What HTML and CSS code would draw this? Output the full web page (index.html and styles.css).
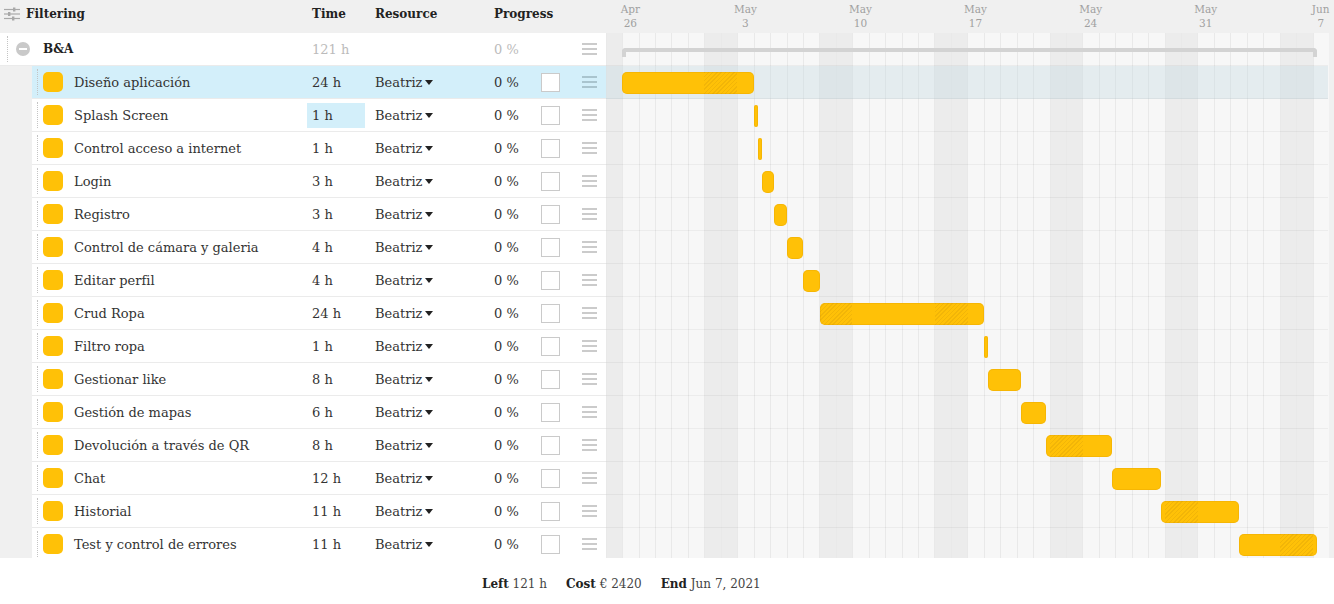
FILE: index.html
```html
<!DOCTYPE html>
<html lang="es">
<head>
<meta charset="utf-8">
<title>Gantt</title>
<link rel="stylesheet" href="styles.css">
</head>
<body>
<div class="main">
  <div class="left">
    <div class="lhead">
      <div class="hcell first">
        <svg class="sliders" width="16" height="14" viewBox="0 0 16 14"><g stroke="#a8a8a8" stroke-width="1.2" fill="none"><line x1="0" y1="2.5" x2="16" y2="2.5"/><line x1="0" y1="7" x2="16" y2="7"/><line x1="0" y1="11.5" x2="16" y2="11.5"/></g><g fill="#a8a8a8"><rect x="9" y="0.5" width="2.4" height="4"/><rect x="4" y="5" width="2.4" height="4"/><rect x="8" y="9.5" width="2.4" height="4"/></g></svg>
        <span>Filtering</span>
      </div>
      <div class="hcell time">Time</div>
      <div class="hcell">Resource</div>
      <div class="hcell">Progress</div>
      <div></div>
      <div></div>
    </div>

    <div class="row parent">
      <div class="tree"><i class="dots"></i><i class="minus"></i><b class="pname">B&amp;A</b></div>
      <div class="time muted">121 h</div>
      <div></div>
      <div class="muted">0 %</div>
      <div></div>
      <div><i class="menu"></i></div>
    </div>

    <div class="row task sel">
      <div class="tree"><i class="dots"></i><i class="sq"></i><span>Diseño aplicación</span></div>
      <div class="time">24 h</div>
      <div class="res">Beatriz<i class="caret"></i></div>
      <div>0 %</div>
      <div><i class="chk"></i></div>
      <div><i class="menu"></i></div>
    </div>
    <div class="row task">
      <div class="tree"><i class="dots"></i><i class="sq"></i><span>Splash Screen</span></div>
      <div class="time"><span class="editing">1 h</span></div>
      <div class="res">Beatriz<i class="caret"></i></div>
      <div>0 %</div>
      <div><i class="chk"></i></div>
      <div><i class="menu"></i></div>
    </div>
    <div class="row task">
      <div class="tree"><i class="dots"></i><i class="sq"></i><span>Control acceso a internet</span></div>
      <div class="time">1 h</div>
      <div class="res">Beatriz<i class="caret"></i></div>
      <div>0 %</div>
      <div><i class="chk"></i></div>
      <div><i class="menu"></i></div>
    </div>
    <div class="row task">
      <div class="tree"><i class="dots"></i><i class="sq"></i><span>Login</span></div>
      <div class="time">3 h</div>
      <div class="res">Beatriz<i class="caret"></i></div>
      <div>0 %</div>
      <div><i class="chk"></i></div>
      <div><i class="menu"></i></div>
    </div>
    <div class="row task">
      <div class="tree"><i class="dots"></i><i class="sq"></i><span>Registro</span></div>
      <div class="time">3 h</div>
      <div class="res">Beatriz<i class="caret"></i></div>
      <div>0 %</div>
      <div><i class="chk"></i></div>
      <div><i class="menu"></i></div>
    </div>
    <div class="row task">
      <div class="tree"><i class="dots"></i><i class="sq"></i><span>Control de cámara y galeria</span></div>
      <div class="time">4 h</div>
      <div class="res">Beatriz<i class="caret"></i></div>
      <div>0 %</div>
      <div><i class="chk"></i></div>
      <div><i class="menu"></i></div>
    </div>
    <div class="row task">
      <div class="tree"><i class="dots"></i><i class="sq"></i><span>Editar perfil</span></div>
      <div class="time">4 h</div>
      <div class="res">Beatriz<i class="caret"></i></div>
      <div>0 %</div>
      <div><i class="chk"></i></div>
      <div><i class="menu"></i></div>
    </div>
    <div class="row task">
      <div class="tree"><i class="dots"></i><i class="sq"></i><span>Crud Ropa</span></div>
      <div class="time">24 h</div>
      <div class="res">Beatriz<i class="caret"></i></div>
      <div>0 %</div>
      <div><i class="chk"></i></div>
      <div><i class="menu"></i></div>
    </div>
    <div class="row task">
      <div class="tree"><i class="dots"></i><i class="sq"></i><span>Filtro ropa</span></div>
      <div class="time">1 h</div>
      <div class="res">Beatriz<i class="caret"></i></div>
      <div>0 %</div>
      <div><i class="chk"></i></div>
      <div><i class="menu"></i></div>
    </div>
    <div class="row task">
      <div class="tree"><i class="dots"></i><i class="sq"></i><span>Gestionar like</span></div>
      <div class="time">8 h</div>
      <div class="res">Beatriz<i class="caret"></i></div>
      <div>0 %</div>
      <div><i class="chk"></i></div>
      <div><i class="menu"></i></div>
    </div>
    <div class="row task">
      <div class="tree"><i class="dots"></i><i class="sq"></i><span>Gestión de mapas</span></div>
      <div class="time">6 h</div>
      <div class="res">Beatriz<i class="caret"></i></div>
      <div>0 %</div>
      <div><i class="chk"></i></div>
      <div><i class="menu"></i></div>
    </div>
    <div class="row task">
      <div class="tree"><i class="dots"></i><i class="sq"></i><span>Devolución a través de QR</span></div>
      <div class="time">8 h</div>
      <div class="res">Beatriz<i class="caret"></i></div>
      <div>0 %</div>
      <div><i class="chk"></i></div>
      <div><i class="menu"></i></div>
    </div>
    <div class="row task">
      <div class="tree"><i class="dots"></i><i class="sq"></i><span>Chat</span></div>
      <div class="time">12 h</div>
      <div class="res">Beatriz<i class="caret"></i></div>
      <div>0 %</div>
      <div><i class="chk"></i></div>
      <div><i class="menu"></i></div>
    </div>
    <div class="row task">
      <div class="tree"><i class="dots"></i><i class="sq"></i><span>Historial</span></div>
      <div class="time">11 h</div>
      <div class="res">Beatriz<i class="caret"></i></div>
      <div>0 %</div>
      <div><i class="chk"></i></div>
      <div><i class="menu"></i></div>
    </div>
    <div class="row task">
      <div class="tree"><i class="dots"></i><i class="sq"></i><span>Test y control de errores</span></div>
      <div class="time">11 h</div>
      <div class="res">Beatriz<i class="caret"></i></div>
      <div>0 %</div>
      <div><i class="chk"></i></div>
      <div><i class="menu"></i></div>
    </div>
  </div>

  <div class="chart">
    <div class="chead">
      <div class="hc"></div>
      <div class="hc"><span>Apr</span><span>26</span></div>
      <div class="hc"></div><div class="hc"></div><div class="hc"></div><div class="hc"></div><div class="hc"></div><div class="hc"></div>
      <div class="hc"><span>May</span><span>3</span></div>
      <div class="hc"></div><div class="hc"></div><div class="hc"></div><div class="hc"></div><div class="hc"></div><div class="hc"></div>
      <div class="hc"><span>May</span><span>10</span></div>
      <div class="hc"></div><div class="hc"></div><div class="hc"></div><div class="hc"></div><div class="hc"></div><div class="hc"></div>
      <div class="hc"><span>May</span><span>17</span></div>
      <div class="hc"></div><div class="hc"></div><div class="hc"></div><div class="hc"></div><div class="hc"></div><div class="hc"></div>
      <div class="hc"><span>May</span><span>24</span></div>
      <div class="hc"></div><div class="hc"></div><div class="hc"></div><div class="hc"></div><div class="hc"></div><div class="hc"></div>
      <div class="hc"><span>May</span><span>31</span></div>
      <div class="hc"></div><div class="hc"></div><div class="hc"></div><div class="hc"></div><div class="hc"></div><div class="hc"></div>
      <div class="hc"><span>Jun</span><span>7</span></div>
    </div>
    <div class="cbody">
      <div class="cols">
        <i class="col we"></i>
        <i class="col"></i><i class="col"></i><i class="col"></i><i class="col"></i><i class="col"></i><i class="col we"></i><i class="col we"></i>
        <i class="col"></i><i class="col"></i><i class="col"></i><i class="col"></i><i class="col"></i><i class="col we"></i><i class="col we"></i>
        <i class="col"></i><i class="col"></i><i class="col"></i><i class="col"></i><i class="col"></i><i class="col we"></i><i class="col we"></i>
        <i class="col"></i><i class="col"></i><i class="col"></i><i class="col"></i><i class="col"></i><i class="col we"></i><i class="col we"></i>
        <i class="col"></i><i class="col"></i><i class="col"></i><i class="col"></i><i class="col"></i><i class="col we"></i><i class="col we"></i>
        <i class="col"></i><i class="col"></i><i class="col"></i><i class="col"></i><i class="col"></i><i class="col we"></i><i class="col we"></i>
        <i class="col"></i>
      </div>
      <div class="crow"><div class="summary" style="left:16.45px;width:695px"></div></div>
      <div class="crow sel"><div class="bar" style="left:16.45px;width:131.6px"><i class="hatch" style="left:82.25px;width:32.9px"></i></div></div>
      <div class="crow"><div class="bar thin" style="left:148.05px;width:4.11px"></div></div>
      <div class="crow"><div class="bar thin" style="left:152.16px;width:4.11px"></div></div>
      <div class="crow"><div class="bar" style="left:156.28px;width:12.34px"></div></div>
      <div class="crow"><div class="bar" style="left:168.61px;width:12.34px"></div></div>
      <div class="crow"><div class="bar" style="left:180.95px;width:16.45px"></div></div>
      <div class="crow"><div class="bar" style="left:197.4px;width:16.45px"></div></div>
      <div class="crow"><div class="bar" style="left:213.85px;width:164.5px"><i class="hatch" style="left:0;width:32.9px"></i><i class="hatch" style="left:115.15px;width:32.9px"></i></div></div>
      <div class="crow"><div class="bar thin" style="left:378.35px;width:4.11px"></div></div>
      <div class="crow"><div class="bar" style="left:382.46px;width:32.9px"></div></div>
      <div class="crow"><div class="bar" style="left:415.36px;width:24.68px"></div></div>
      <div class="crow"><div class="bar" style="left:440.04px;width:65.8px"><i class="hatch" style="left:4.11px;width:32.9px"></i></div></div>
      <div class="crow"><div class="bar" style="left:505.84px;width:49.35px"></div></div>
      <div class="crow"><div class="bar" style="left:555.19px;width:78.14px"><i class="hatch" style="left:4.11px;width:32.9px"></i></div></div>
      <div class="crow"><div class="bar" style="left:633.33px;width:78.13px"><i class="hatch" style="left:41.12px;width:32.9px"></i></div></div>
    </div>
  </div>
</div>
<div class="footer">
  <span><b>Left</b> 121 h</span>
  <span><b>Cost</b> € 2420</span>
  <span><b>End</b> Jun 7, 2021</span>
</div>
</body>
</html>
```
FILE: styles.css
```css
* { box-sizing: border-box; }
html, body { margin: 0; overflow: hidden; }
body {
  width: 1334px;
  height: 604px;
  background: #fff;
  font-family: "DejaVu Serif", "Liberation Serif", serif;
  font-size: 13px;
  color: #333;
}
i { display: block; font-style: normal; }

.main {
  display: flex;
  height: 558px;
  overflow: hidden;
  background: #f0f0f0;
}

/* left grid */
.left { width: 605.7px; flex: none; }
.lhead, .row {
  display: grid;
  grid-template-columns: 307px 68px 119px 47px 41px 1fr;
  align-items: center;
}
.lhead {
  height: 33px;
  padding-bottom: 5px;
  font-weight: bold;
  font-size: 12px;
  color: #222;
}
.hcell.first { display: flex; align-items: center; padding-left: 4px; }
.sliders { margin-right: 6px; }
.hcell.time { padding-left: 5px; }

.row {
  height: 33px;
  background: #fff;
  border-bottom: 1px solid #ebebeb;
}
.row.task {
  margin-left: 32px;
  grid-template-columns: 275px 68px 119px 47px 41px 1fr;
}
.row.sel { background: #d3effa; }
.tree {
  display: flex;
  align-items: center;
  height: 100%;
  white-space: nowrap;
}
.dots {
  align-self: stretch;
  width: 1px;
  border-left: 1px dotted #c4c4c4;
  margin: 3px 0;
}
.parent .tree { padding-left: 7px; }
.parent .dots { margin-right: 8px; }
.task .tree { padding-left: 5px; }
.task .dots { margin-right: 5px; }
.minus {
  width: 14px;
  height: 14px;
  border-radius: 50%;
  background: #c9c9c9;
  position: relative;
  margin-right: 13px;
}
.minus::after {
  content: "";
  position: absolute;
  left: 3px;
  top: 6px;
  width: 8px;
  height: 2px;
  background: #fff;
}
.pname { color: #222; font-size: 12px; }
.sq {
  width: 20px;
  height: 20px;
  border-radius: 5px;
  background: #ffc107;
  margin-right: 11px;
}
.time { padding-left: 5px; }
.muted { color: #bbb; }
.editing {
  display: flex;
  align-items: center;
  width: 58px;
  height: 25px;
  margin-left: -5px;
  padding-left: 5px;
  background: #d3effa;
}
.res { display: flex; align-items: center; }
.caret {
  width: 0;
  height: 0;
  margin-left: 3px;
  border-left: 4px solid transparent;
  border-right: 4px solid transparent;
  border-top: 5px solid #222;
}
.chk {
  width: 19px;
  height: 19px;
  background: #fff;
  border: 1px solid #cacaca;
}
.menu {
  width: 15px;
  height: 12px;
  border-top: 2px solid #cbcbcb;
  border-bottom: 2px solid #cbcbcb;
  position: relative;
}
.menu::after {
  content: "";
  position: absolute;
  left: 0;
  right: 0;
  top: 3px;
  height: 2px;
  background: #cbcbcb;
}
.sel .menu { border-color: #a9c4ce; }
.sel .menu::after { background: #a9c4ce; }

/* chart */
.chart { width: 723.8px; flex: none; }
.chead {
  height: 33px;
  display: flex;
  color: #a0a0a0;
  font-size: 10.5px;
  line-height: 14px;
}
.hc {
  width: 16.45px;
  flex: none;
  display: flex;
  flex-direction: column;
  align-items: center;
  padding-top: 2px;
  white-space: nowrap;
}
.cbody {
  position: relative;
  height: 525px;
  border-right: 1px solid #e4e4e4;
}
.cols {
  position: absolute;
  inset: 0;
  display: flex;
}
.col {
  width: 16.45px;
  flex: none;
  border-left: 1px solid #e9e9e9;
  background: #f7f7f7;
}
.col.we { background: #ececec; }
.crow {
  position: relative;
  height: 33px;
  border-bottom: 1px solid rgba(0, 0, 0, 0.045);
}
.crow.sel { background: rgba(190, 214, 225, 0.32); }
.summary {
  position: absolute;
  top: 15px;
  height: 9px;
  border: 4px solid #d3d3d3;
  border-bottom: none;
  border-radius: 4px 4px 0 0;
}
.bar {
  position: absolute;
  top: 6px;
  height: 22px;
  border-radius: 5px;
  background: #ffc107;
  box-shadow: inset 0 0 0 1px rgba(225, 160, 0, 0.3);
  overflow: hidden;
}
.bar.thin { border-radius: 2px; }
.hatch {
  position: absolute;
  top: 0;
  bottom: 0;
  background: repeating-linear-gradient(135deg, rgba(190, 135, 10, 0.2) 0 1px, transparent 1px 3px);
}

/* footer */
.footer {
  height: 46px;
  display: flex;
  align-items: center;
  gap: 19px;
  padding-left: 482px;
  padding-top: 6px;
  font-size: 12px;
  color: #444;
}
.footer b { color: #222; }
```
